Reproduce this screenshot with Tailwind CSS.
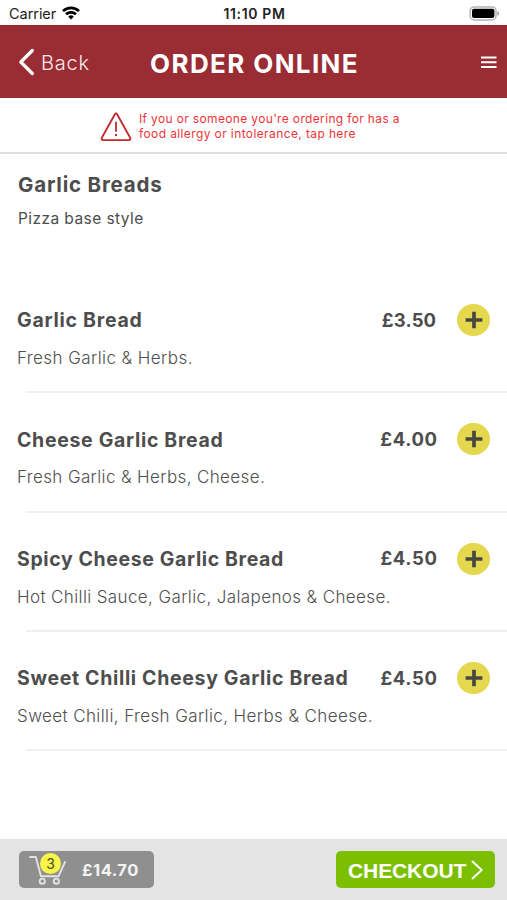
<!DOCTYPE html>
<html lang="en">
<head>
<meta charset="utf-8">
<title>Order Online</title>
<script src="https://cdn.jsdelivr.net/npm/@tailwindcss/browser@4"></script>
</head>
<body class="bg-white font-['Inter',sans-serif]">
<div class="w-[507px] h-[900px] flex flex-col overflow-hidden whitespace-nowrap text-[#4d4d4d]">

  <!-- Status bar -->
  <div class="h-[25px] shrink-0 grid grid-cols-[1fr_auto_1fr] items-center pl-[9px] pr-[7px] pt-[2px] text-[#222]">
    <div class="flex items-center gap-[6px]">
      <span class="text-[14.5px] tracking-[-0.05px]">Carrier</span>
      <svg class="-mt-px" width="18" height="14" viewBox="0 0 18 14" fill="none" stroke="#000" stroke-width="2.7">
        <path d="M1 5.1a11.4 11.4 0 0 1 16 0"/>
        <path d="M4 8.3a7.2 7.2 0 0 1 10 0"/>
        <path d="M9 13.600 6.200 10.700a4 4 0 0 1 5.600 0z" fill="#000" stroke="none"/>
      </svg>
    </div>
    <div class="text-[14px] font-semibold tracking-[0.65px]">11:10 PM</div>
    <div class="flex justify-end">
      <svg width="31" height="15" viewBox="0 0 31 15">
        <rect x="1.200" y="0.900" width="25.800" height="13" rx="4" fill="#fff" stroke="#b4b4b4" stroke-width="1.500"/>
        <rect x="3" y="2.700" width="22.400" height="9.400" rx="2" fill="#000"/>
        <path d="M28.300 5v4.800q2-.6 2-2.400t-2-2.400z" fill="#a9a9a9"/>
      </svg>
    </div>
  </div>

  <!-- Header -->
  <header class="h-[73px] shrink-0 grid grid-cols-[1fr_auto_1fr] items-center bg-[#9a2c34] text-white pl-[18px] pr-[10px]">
    <div class="flex items-center gap-[6px]">
      <svg width="17" height="28" viewBox="0 0 17 28" fill="none" stroke="#fff" stroke-width="3.200" stroke-linecap="round" stroke-linejoin="round"><path d="M14.300 2.500 2.800 14 14.300 25.500"/></svg>
      <span class="text-[20px] font-light tracking-[0.800px] text-[#fbe9ea] mt-[2px]">Back</span>
    </div>
    <h1 class="text-[26px] font-bold tracking-[1.370px] relative -left-[3px] mt-[3px]">ORDER ONLINE</h1>
    <div class="flex justify-end">
      <svg width="16" height="14" viewBox="0 0 16 14" stroke="#fff" stroke-width="2"><path d="M0 2.500h15.500M0 7.200h15.500M0 11.900h15.500"/></svg>
    </div>
  </header>

  <!-- Allergy notice -->
  <div class="h-[56px] shrink-0 flex items-center gap-[7px] pl-[100px] border-b-2 border-[#e0e0e0] text-[#f03438]">
    <svg class="mt-[4px]" width="32" height="30" viewBox="0 0 32 30" fill="none" stroke="#c4262c" stroke-width="1.800" stroke-linejoin="round" stroke-linecap="round">
      <path d="M14.900 2.200q1.100-1.500 2.200 0L30.300 26q.6 1.800-1.300 2.200H3q-1.900-.4-1.300-2.200z"/>
      <path d="M16 10.500v8.500" stroke-width="1.800"/><path d="M16 22.800v.4" stroke-width="2.200"/>
    </svg>
    <p class="text-[12px] leading-[14.500px] tracking-[0.350px] mt-[3px]">If you or someone you're ordering for has a<br><span class="tracking-[0.390px]">food allergy or intolerance, tap here</span></p>
  </div>

  <!-- Menu -->
  <main class="grow min-h-0">
    <section class="h-[120px] pl-[18px] pt-[16px]">
      <h2 class="text-[20.500px] leading-[30px] font-bold tracking-[0.800px]">Garlic Breads</h2>
      <p class="text-[15.500px] leading-[20px] mt-[9px] tracking-[0.420px]">Pizza base style</p>
    </section>

    <article class="h-[119.300px] flex flex-col pl-[17px]">
      <div class="mt-[29px] h-[34px] flex items-center pr-[17px]">
        <h3 class="grow text-[19.500px] font-bold tracking-[0.750px] mt-[2px]">Garlic Bread</h3>
        <span class="w-[58px] text-center text-[18.500px] font-bold tracking-[0.150px] mr-[19px] mt-px">£3.50</span>
        <button class="w-[33px] h-[32px] grid place-items-center rounded-full bg-[#e5d84f]"><svg width="18" height="18" viewBox="0 0 18 18" stroke="#494840" stroke-width="3.700"><path d="M9 .8v16.400M.6 9h16.800"/></svg></button>
      </div>
      <p class="mt-[8px] text-[17px] leading-[26px] font-light tracking-[0.420px] text-[#505050]">Fresh Garlic &amp; Herbs.</p>
      <div class="mt-auto ml-[9px] h-[2px] bg-[#efefef]"></div>
    </article>

    <article class="h-[119.300px] flex flex-col pl-[17px]">
      <div class="mt-[29px] h-[34px] flex items-center pr-[17px]">
        <h3 class="grow text-[19.500px] font-bold tracking-[0.680px] mt-[2px]">Cheese Garlic Bread</h3>
        <span class="w-[58px] text-center text-[18.500px] font-bold tracking-[0.600px] mr-[19px] mt-px">£4.00</span>
        <button class="w-[33px] h-[32px] grid place-items-center rounded-full bg-[#e5d84f]"><svg width="18" height="18" viewBox="0 0 18 18" stroke="#494840" stroke-width="3.700"><path d="M9 .8v16.400M.6 9h16.800"/></svg></button>
      </div>
      <p class="mt-[8px] text-[17px] leading-[26px] font-light tracking-[0.370px] text-[#505050]">Fresh Garlic &amp; Herbs, Cheese.</p>
      <div class="mt-auto ml-[9px] h-[2px] bg-[#efefef]"></div>
    </article>

    <article class="h-[119.300px] flex flex-col pl-[17px]">
      <div class="mt-[29px] h-[34px] flex items-center pr-[17px]">
        <h3 class="grow text-[19.500px] font-bold tracking-[0.620px] mt-[2px]">Spicy Cheese Garlic Bread</h3>
        <span class="w-[58px] text-center text-[18.500px] font-bold tracking-[0.600px] mr-[19px] mt-px">£4.50</span>
        <button class="w-[33px] h-[32px] grid place-items-center rounded-full bg-[#e5d84f]"><svg width="18" height="18" viewBox="0 0 18 18" stroke="#494840" stroke-width="3.700"><path d="M9 .8v16.400M.6 9h16.800"/></svg></button>
      </div>
      <p class="mt-[8px] text-[17px] leading-[26px] font-light tracking-[0.380px] text-[#505050]">Hot Chilli Sauce, Garlic, Jalapenos &amp; Cheese.</p>
      <div class="mt-auto ml-[9px] h-[2px] bg-[#efefef]"></div>
    </article>

    <article class="h-[119.300px] flex flex-col pl-[17px]">
      <div class="mt-[29px] h-[34px] flex items-center pr-[17px]">
        <h3 class="grow text-[19.500px] font-bold tracking-[0.670px] mt-[2px]">Sweet Chilli Cheesy Garlic Bread</h3>
        <span class="w-[58px] text-center text-[18.500px] font-bold tracking-[0.600px] mr-[19px] mt-px">£4.50</span>
        <button class="w-[33px] h-[32px] grid place-items-center rounded-full bg-[#e5d84f]"><svg width="18" height="18" viewBox="0 0 18 18" stroke="#494840" stroke-width="3.700"><path d="M9 .8v16.400M.6 9h16.800"/></svg></button>
      </div>
      <p class="mt-[8px] text-[17px] leading-[26px] font-light tracking-[0.390px] text-[#505050]">Sweet Chilli, Fresh Garlic, Herbs &amp; Cheese.</p>
      <div class="mt-auto ml-[9px] h-[2px] bg-[#efefef]"></div>
    </article>
  </main>

  <!-- Basket bar -->
  <footer class="h-[61px] shrink-0 flex justify-between items-start bg-[#e4e4e4] pl-[19px] pr-[12px] pt-[12px]">
    <button class="w-[135px] h-[37px] flex items-center rounded-[5px] bg-[#8f8f8f] pl-[10px] text-[#f3f3f3]">
      <span class="relative w-[37px] h-[32px]">
        <svg width="37" height="32" viewBox="0 0 37 32" fill="none" stroke="#e2e2e2" stroke-width="1.900" stroke-linecap="round" stroke-linejoin="round">
          <path d="M1 3h5.800L12 22.300H29.500L36 8"/>
          <circle cx="13.300" cy="27.200" r="2.600"/><circle cx="27.300" cy="27.200" r="2.600"/>
        </svg>
        <span class="absolute left-[11px] -top-px size-[21px] rounded-full bg-[#f9f547] text-[#4b4a30] text-[14px] leading-[21px] text-center">3</span>
      </span>
      <span class="ml-[16px] text-[16.500px] font-bold tracking-[0.500px] mt-px">£14.70</span>
    </button>
    <button class="w-[159px] h-[37px] flex items-center rounded-[5px] bg-[#7cbf00] pl-[12px] text-white">
      <span class="font-['Liberation_Sans',sans-serif] font-bold text-[21px] leading-[24px] mt-[2px] tracking-[-0.1px]">CHECKOUT</span>
      <svg class="ml-[5px]" width="13" height="20" viewBox="0 0 13 20" fill="none" stroke="#fff" stroke-width="2" stroke-linecap="round" stroke-linejoin="round"><path d="M1.500 1.500 10.700 10 1.500 18.500"/></svg>
    </button>
  </footer>
</div>
</body>
</html>
